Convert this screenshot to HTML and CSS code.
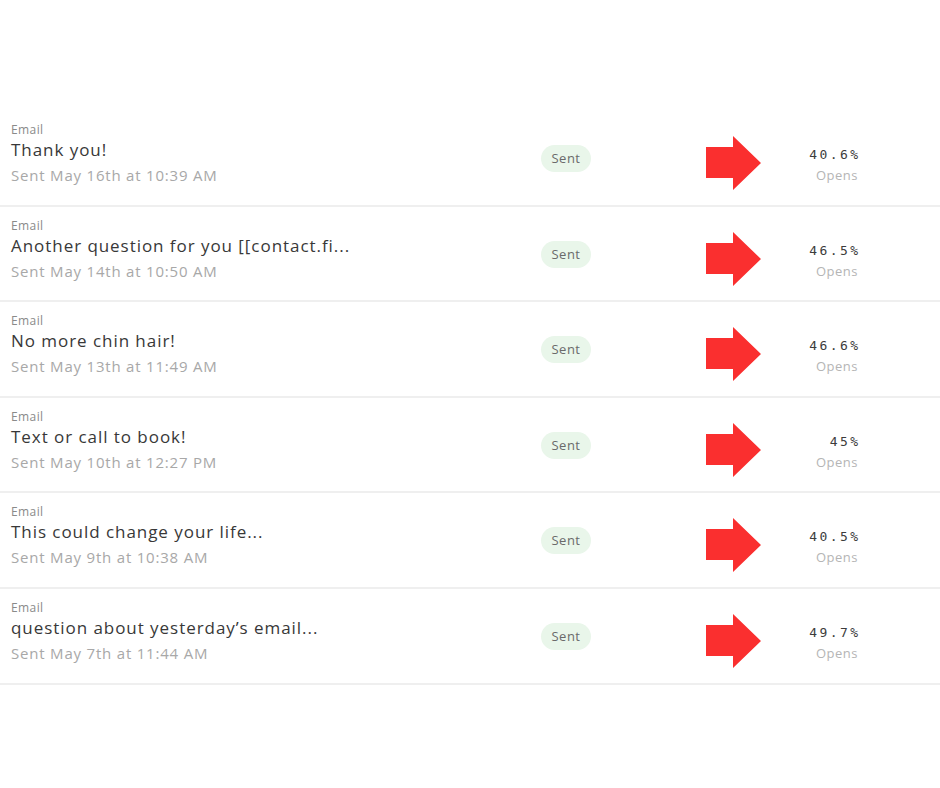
FILE: index.html
```html
<!DOCTYPE html>
<html>
<head>
<meta charset="utf-8">
<link rel="stylesheet" href="styles.css">
</head>
<body>
<div class="list">
  <div class="row">
    <div class="info"><div class="kind">Email</div><div class="title">Thank you!</div><div class="meta">Sent May 16th at 10:39 AM</div></div>
    <div class="badge">Sent</div>
    <svg class="arrow" viewBox="0 0 55 54"><polygon points="0,11 27,11 27,0 55,27 27,54 27,42 0,42" fill="#fa2f2f"/></svg>
    <div class="stat"><div class="pct">40.6%</div><div class="label">Opens</div></div>
  </div>
  <div class="row">
    <div class="info"><div class="kind">Email</div><div class="title">Another question for you [[contact.fi...</div><div class="meta">Sent May 14th at 10:50 AM</div></div>
    <div class="badge">Sent</div>
    <svg class="arrow" viewBox="0 0 55 54"><polygon points="0,11 27,11 27,0 55,27 27,54 27,42 0,42" fill="#fa2f2f"/></svg>
    <div class="stat"><div class="pct">46.5%</div><div class="label">Opens</div></div>
  </div>
  <div class="row">
    <div class="info"><div class="kind">Email</div><div class="title">No more chin hair!</div><div class="meta">Sent May 13th at 11:49 AM</div></div>
    <div class="badge">Sent</div>
    <svg class="arrow" viewBox="0 0 55 54"><polygon points="0,11 27,11 27,0 55,27 27,54 27,42 0,42" fill="#fa2f2f"/></svg>
    <div class="stat"><div class="pct">46.6%</div><div class="label">Opens</div></div>
  </div>
  <div class="row">
    <div class="info"><div class="kind">Email</div><div class="title">Text or call to book!</div><div class="meta">Sent May 10th at 12:27 PM</div></div>
    <div class="badge">Sent</div>
    <svg class="arrow" viewBox="0 0 55 54"><polygon points="0,11 27,11 27,0 55,27 27,54 27,42 0,42" fill="#fa2f2f"/></svg>
    <div class="stat"><div class="pct">45%</div><div class="label">Opens</div></div>
  </div>
  <div class="row">
    <div class="info"><div class="kind">Email</div><div class="title">This could change your life...</div><div class="meta">Sent May 9th at 10:38 AM</div></div>
    <div class="badge">Sent</div>
    <svg class="arrow" viewBox="0 0 55 54"><polygon points="0,11 27,11 27,0 55,27 27,54 27,42 0,42" fill="#fa2f2f"/></svg>
    <div class="stat"><div class="pct">40.5%</div><div class="label">Opens</div></div>
  </div>
  <div class="row">
    <div class="info"><div class="kind">Email</div><div class="title">question about yesterday’s email...</div><div class="meta">Sent May 7th at 11:44 AM</div></div>
    <div class="badge">Sent</div>
    <svg class="arrow" viewBox="0 0 55 54"><polygon points="0,11 27,11 27,0 55,27 27,54 27,42 0,42" fill="#fa2f2f"/></svg>
    <div class="stat"><div class="pct">49.7%</div><div class="label">Opens</div></div>
  </div>
</div>
</body>
</html>
```
FILE: styles.css
```css
html, body {
  margin: 0;
  padding: 0;
  background: #fff;
}
body {
  font-family: "Open Sans", "Noto Sans", sans-serif;
  width: 940px;
  height: 788px;
  overflow: hidden;
}
.list {
  padding-top: 111px;
}
.row {
  box-sizing: border-box;
  height: 95.6px;
  border-bottom: 2px solid #efefef;
  display: grid;
  grid-template-columns: 530px 165px 55px 97px;
  align-items: start;
  padding-left: 11px;
}
.info {
  padding-top: 12px;
}
.kind {
  font-size: 12px;
  line-height: 14px;
  letter-spacing: 0.4px;
  color: #8a8a8a;
}
.title {
  margin-top: 2px;
  font-size: 17px;
  line-height: 22px;
  letter-spacing: 0.95px;
  color: #383838;
  white-space: nowrap;
}
.meta {
  margin-top: 5px;
  font-size: 15px;
  line-height: 18px;
  letter-spacing: 0.8px;
  color: #a8a8a8;
  white-space: nowrap;
}
.badge {
  margin-top: 34px;
  width: 50px;
  height: 27px;
  border-radius: 14px;
  background: #e9f6ea;
  color: #6a6a6a;
  font-size: 13px;
  letter-spacing: 0.5px;
  line-height: 27px;
  text-align: center;
}
.arrow {
  margin-top: 25px;
  width: 55px;
  height: 54px;
  display: block;
}
.stat {
  margin-top: 36px;
  text-align: right;
}
.pct {
  font-family: "DejaVu Sans Mono", monospace;
  font-size: 13px;
  line-height: 16px;
  letter-spacing: 2.4px;
  margin-right: -2.4px;
  color: #3c3c3c;
}
.label {
  margin-top: 4px;
  font-size: 13px;
  line-height: 16px;
  letter-spacing: 0.5px;
  color: #b5b5b5;
}
```
